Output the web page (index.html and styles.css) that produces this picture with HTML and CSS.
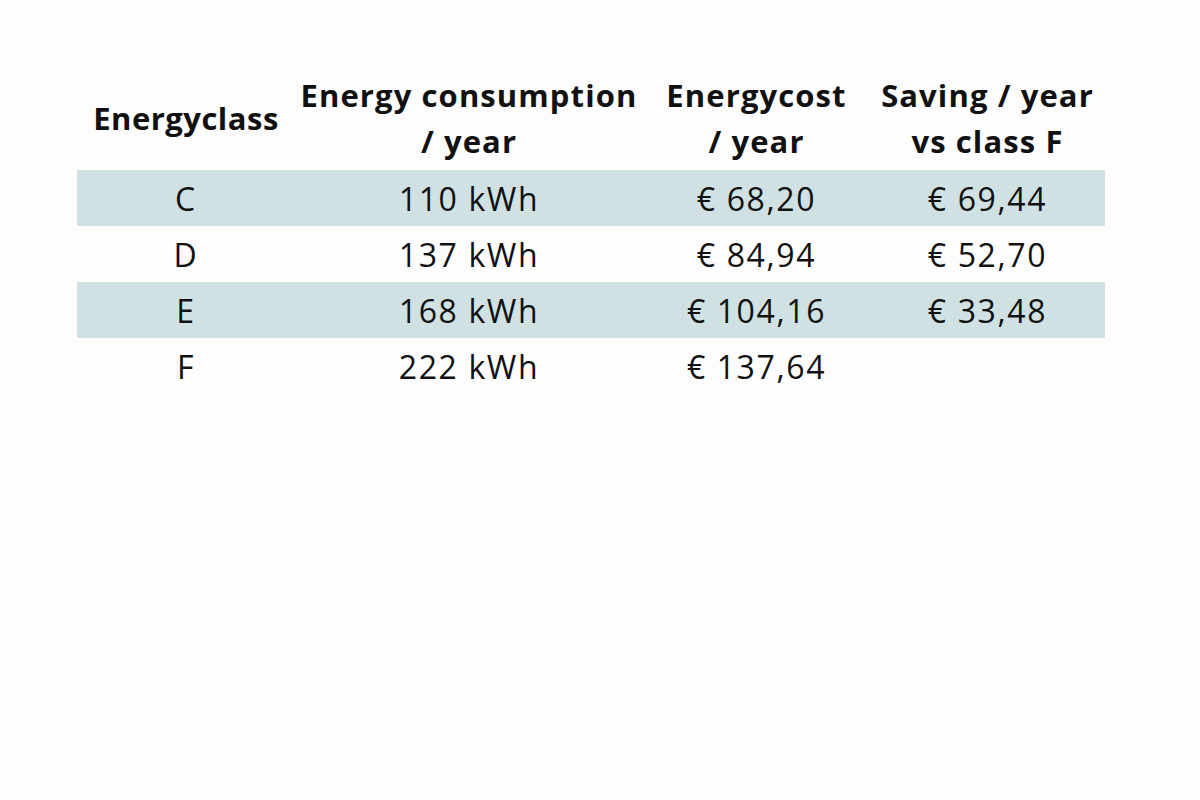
FILE: index.html
```html
<!DOCTYPE html>
<html lang="en">
<head>
<meta charset="utf-8">
<title>Energy classes</title>
<link rel="stylesheet" href="styles.css">
</head>
<body>
<main class="page">
  <table class="energy">
    <colgroup>
      <col class="c1"><col class="c2"><col class="c3"><col class="c4">
    </colgroup>
    <thead>
      <tr>
        <th class="tight">Energyclass</th>
        <th>Energy consumption<br>/ year</th>
        <th>Energycost<br>/ year</th>
        <th>Saving / year<br>vs class F</th>
      </tr>
    </thead>
    <tbody>
      <tr class="shade"><td>C</td><td>110 kWh</td><td>€ 68,20</td><td>€ 69,44</td></tr>
      <tr><td>D</td><td>137 kWh</td><td>€ 84,94</td><td>€ 52,70</td></tr>
      <tr class="shade"><td>E</td><td>168 kWh</td><td>€ 104,16</td><td>€ 33,48</td></tr>
      <tr><td>F</td><td>222 kWh</td><td>€ 137,64</td><td></td></tr>
    </tbody>
  </table>
</main>
</body>
</html>
```

FILE: styles.css
```css
html, body {
  margin: 0;
  padding: 0;
  background: #fdfdfd;
}
body {
  width: 1200px;
  height: 800px;
  font-family: "Open Sans", "Liberation Sans", sans-serif;
  color: #111;
}
.page {
  padding: 72px 0 0 77px;
}
.energy {
  border-collapse: collapse;
  table-layout: fixed;
  width: 1028px;
}
.c1 { width: 218px; }
.c2 { width: 348px; }
.c3 { width: 227px; }
.c4 { width: 235px; }
.energy th {
  font-weight: 700;
  font-size: 31px;
  line-height: 46px;
  letter-spacing: 1.1px;
  text-align: center;
  vertical-align: middle;
  padding: 0 0 6px;
  white-space: nowrap;
}
.energy th.tight {
  letter-spacing: 0.5px;
}
.energy td {
  font-size: 32px;
  letter-spacing: 1.6px;
  text-align: center;
  vertical-align: middle;
  height: 56px;
  padding: 0;
}
.energy tr.shade td {
  background: #cfe1e3;
}
```
